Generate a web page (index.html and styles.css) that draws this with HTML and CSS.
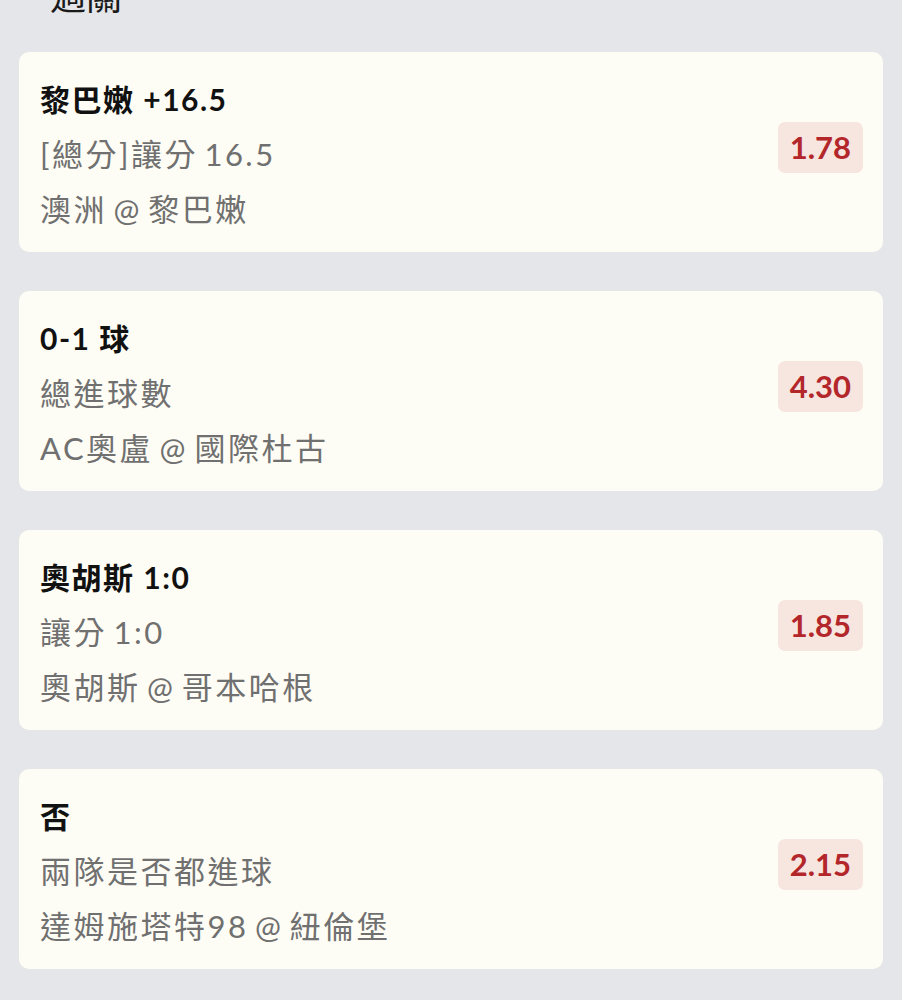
FILE: index.html
```html
<!DOCTYPE html>
<html lang="zh-Hant">
<head>
  <meta charset="UTF-8">
  <title>過關</title>
  <link rel="stylesheet" href="styles.css">
</head>
<body>

  <h2 class="section-title">過關</h2>

  <!-- BET LIST -->
  <div class="bet-list">

    <div class="bet">
      <div class="bet-info">
        <div class="bet-pick">黎巴嫩 +16.5</div>
        <div class="bet-line">[總分]讓分 16.5</div>
        <div class="bet-line">澳洲 @ 黎巴嫩</div>
      </div>
      <span class="odds">1.78</span>
    </div>

    <div class="bet">
      <div class="bet-info">
        <div class="bet-pick">0-1 球</div>
        <div class="bet-line">總進球數</div>
        <div class="bet-line">AC奧盧 @ 國際杜古</div>
      </div>
      <span class="odds">4.30</span>
    </div>

    <div class="bet">
      <div class="bet-info">
        <div class="bet-pick">奧胡斯 1:0</div>
        <div class="bet-line">讓分 1:0</div>
        <div class="bet-line">奧胡斯 @ 哥本哈根</div>
      </div>
      <span class="odds">1.85</span>
    </div>

    <div class="bet">
      <div class="bet-info">
        <div class="bet-pick">否</div>
        <div class="bet-line">兩隊是否都進球</div>
        <div class="bet-line">達姆施塔特98 @ 紐倫堡</div>
      </div>
      <span class="odds">2.15</span>
    </div>

  </div>

</body>
</html>
```

FILE: styles.css
```css
body {
  margin: 0;
  font-family: "Lato", "Noto Sans CJK TC", sans-serif;
  background: #e5e6e9;
  color: #111;
}

.section-title {
  margin: -28px 0 32px 50px;
  font-size: 36px;
  line-height: 48px;
  font-weight: 400;
  color: #1a1a1a;
}

.bet-list {
  display: flex;
  flex-direction: column;
  gap: 39px;
  padding: 0 19px;
}

.bet {
  display: flex;
  align-items: center;
  justify-content: space-between;
  background: #fefdf5;
  border-radius: 10px;
  padding: 20px 20px 15px 21px;
}

.bet-info {
  font-size: 30px;
  line-height: 55px;
}

.bet-pick {
  font-weight: 700;
  color: #111;
  letter-spacing: 1.5px;
}

.bet-line {
  color: #707070;
  font-size: 31px;
  letter-spacing: 2.5px;
  word-spacing: -4px;
}

/* Odds badge */
.odds {
  background: #f7e5e0;
  color: #b3262a;
  font-size: 31px;
  font-weight: 700;
  line-height: 51px;
  padding: 0 12px;
  border-radius: 7px;
  margin-top: -15px;
}
```
